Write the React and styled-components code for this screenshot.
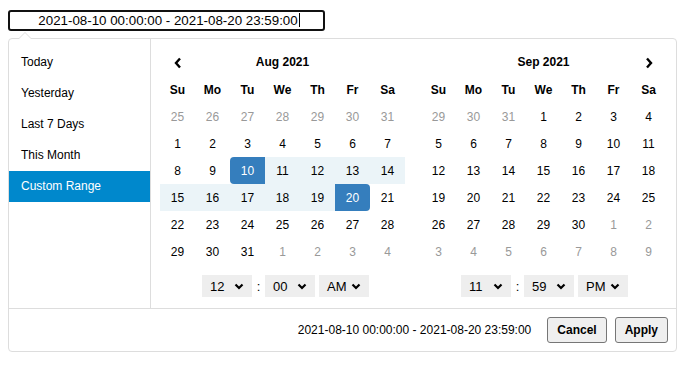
import React from "react";
import styled, { createGlobalStyle } from "styled-components";

const GlobalStyle = createGlobalStyle`
  body {
    margin: 0;
    background: #fff;
    font-family: "Liberation Sans", Arial, sans-serif;
    color: #000;
  }
`;

const Page = styled.div`
  padding: 10px 8px;
`;

const Field = styled.div`
  box-sizing: border-box;
  width: 317px;
  height: 21px;
  border: 2px solid #111;
  border-radius: 3px;
  font-size: 13.33px;
  line-height: 17px;
  text-align: center;
  padding-left: 5px;
`;

const Caret = styled.span`
  display: inline-block;
  width: 1px;
  height: 14px;
  background: #000;
  vertical-align: -2px;
  margin-left: 1px;
`;

const Picker = styled.div`
  position: relative;
  margin-top: 7px;
  width: 669px;
  box-sizing: border-box;
  border: 1px solid #ddd;
  border-radius: 4px;
  background: #fff;

  &::before,
  &::after {
    content: "";
    position: absolute;
    border-style: solid;
    border-color: transparent;
  }
  &::before {
    left: 9px;
    top: -7px;
    border-width: 0 7px 7px 7px;
    border-bottom-color: #ddd;
  }
  &::after {
    left: 10px;
    top: -6px;
    border-width: 0 6px 6px 6px;
    border-bottom-color: #fff;
  }
`;

const Body = styled.div`
  display: flex;
`;

const Ranges = styled.ul`
  list-style: none;
  margin: 0;
  padding: 8px 0 0;
  width: 141px;
  border-right: 1px solid #ddd;
`;

const RangeItem = styled.li`
  height: 31px;
  line-height: 31px;
  padding-left: 12px;
  font-size: 12px;
  background: ${(p) => (p.$active ? "#08c" : "transparent")};
  color: ${(p) => (p.$active ? "#fff" : "#000")};
`;

const Calendars = styled.div`
  display: flex;
  gap: 16px;
  padding: 10px 10px 11px 9px;
`;

const Calendar = styled.div`
  width: 245px;
  display: flex;
  flex-direction: column;
`;

const Grid = styled.div`
  display: grid;
  grid-template-columns: repeat(7, 35px);
  grid-auto-rows: 27px;
  font-size: 12px;
`;

const Cell = styled.div`
  display: flex;
  align-items: center;
  justify-content: center;
`;

const MonthName = styled(Cell)`
  grid-column: span 5;
  font-weight: bold;
  padding-bottom: 1px;
`;

const WeekDay = styled(Cell)`
  font-weight: bold;
`;

const Day = styled(Cell)`
  color: ${(p) => (p.$edge ? "#fff" : p.$off ? "#999" : "#000")};
  background: ${(p) => (p.$edge ? "#357ebd" : p.$inRange ? "#ebf4f8" : "transparent")};
  border-radius: ${(p) =>
    p.$edge === "start" ? "4px 0 0 4px" : p.$edge === "end" ? "0 4px 4px 0" : "0"};
`;

const TimeRow = styled.div`
  margin-top: 10px;
  padding-left: ${(p) => p.$shift}px;
  display: flex;
  justify-content: center;
  align-items: center;
  font-size: 13px;
`;

const Select = styled.div`
  box-sizing: border-box;
  width: 50px;
  height: 22px;
  background: #eee;
  display: flex;
  align-items: center;
  justify-content: space-between;
  padding: 0 8px 0 8px;
  margin-right: ${(p) => (p.$gap ? "4px" : "0")};
`;

const Colon = styled.span`
  width: 13px;
  text-align: center;
`;

const Footer = styled.div`
  border-top: 1px solid #ddd;
  padding: 8px;
  display: flex;
  justify-content: flex-end;
  align-items: center;
  gap: 8px;
`;

const Summary = styled.span`
  font-size: 12px;
  margin-right: 8px;
`;

const Button = styled.button`
  height: 26px;
  padding: 0 9px;
  font-family: "Liberation Sans", Arial, sans-serif;
  font-size: 12px;
  font-weight: bold;
  color: #000;
  background: #efefef;
  border: 1px solid #767676;
  border-radius: 3px;
`;

const Chevron = ({ dir }) => (
  <svg width="10" height="12" viewBox="0 0 10 12">
    <polyline
      points={dir === "left" ? "7,1.5 3,6 7,10.5" : "3,1.5 7,6 3,10.5"}
      fill="none"
      stroke="#000"
      strokeWidth="2.4"
    />
  </svg>
);

const Down = () => (
  <svg width="10" height="7" viewBox="0 0 10 7">
    <polyline points="1.5,1.5 5,5 8.5,1.5" fill="none" stroke="#000" strokeWidth="2.2" />
  </svg>
);

const weekdays = ["Su", "Mo", "Tu", "We", "Th", "Fr", "Sa"];

const range = (a, b) => Array.from({ length: b - a + 1 }, (_, i) => a + i);

const aug = [
  ...range(25, 31).map((d) => ({ d, off: true })),
  ...range(1, 31).map((d) => ({
    d,
    edge: d === 10 ? "start" : d === 20 ? "end" : undefined,
    inRange: d > 10 && d < 20,
  })),
  ...range(1, 4).map((d) => ({ d, off: true })),
];

const sep = [
  ...range(29, 31).map((d) => ({ d, off: true })),
  ...range(1, 30).map((d) => ({ d })),
  ...range(1, 9).map((d) => ({ d, off: true })),
];

const Month = ({ title, days, prev, next, time, shift }) => (
  <Calendar>
    <Grid>
      <Cell>{prev && <Chevron dir="left" />}</Cell>
      <MonthName>{title}</MonthName>
      <Cell>{next && <Chevron dir="right" />}</Cell>
      {weekdays.map((w) => (
        <WeekDay key={w}>{w}</WeekDay>
      ))}
      {days.map((x, i) => (
        <Day key={i} $off={x.off} $edge={x.edge} $inRange={x.inRange}>
          {x.d}
        </Day>
      ))}
    </Grid>
    <TimeRow $shift={shift}>
      <Select>
        {time[0]}
        <Down />
      </Select>
      <Colon>:</Colon>
      <Select $gap>
        {time[1]}
        <Down />
      </Select>
      <Select>
        {time[2]}
        <Down />
      </Select>
    </TimeRow>
  </Calendar>
);

const rangeLabels = ["Today", "Yesterday", "Last 7 Days", "This Month", "Custom Range"];

export default function App() {
  return (
    <Page>
      <GlobalStyle />
      <Field>
        2021-08-10 00:00:00 - 2021-08-20 23:59:00
        <Caret />
      </Field>
      <Picker>
        <Body>
          <Ranges>
            {rangeLabels.map((r) => (
              <RangeItem key={r} $active={r === "Custom Range"}>
                {r}
              </RangeItem>
            ))}
          </Ranges>
          <Calendars>
            <Month title="Aug 2021" days={aug} prev shift={6} time={["12", "00", "AM"]} />
            <Month title="Sep 2021" days={sep} next shift={2} time={["11", "59", "PM"]} />
          </Calendars>
        </Body>
        <Footer>
          <Summary>2021-08-10 00:00:00 - 2021-08-20 23:59:00</Summary>
          <Button>Cancel</Button>
          <Button>Apply</Button>
        </Footer>
      </Picker>
    </Page>
  );
}
